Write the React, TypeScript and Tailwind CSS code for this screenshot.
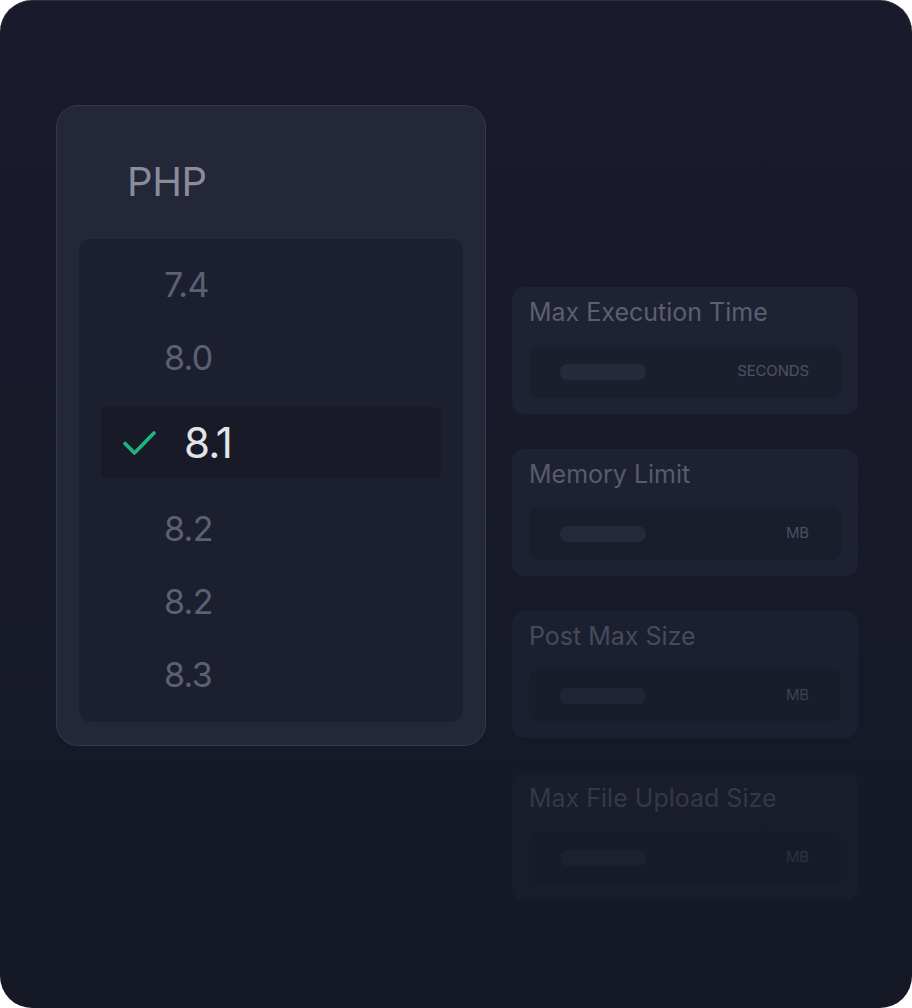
const versions = ['7.4', '8.0', '8.1', '8.2', '8.2', '8.3']

const settings = [
  { label: 'Max Execution Time', unit: 'SECONDS', fade: 'opacity-100' },
  { label: 'Memory Limit', unit: 'MB', fade: 'opacity-95' },
  { label: 'Post Max Size', unit: 'MB', fade: 'opacity-70' },
  { label: 'Max File Upload Size', unit: 'MB', fade: 'opacity-45' },
]

function Check() {
  return (
    <svg width="36" height="28" viewBox="0 0 36 28" fill="none">
      <path d="M3 14.5 L12.5 24 L32 4" stroke="#1bb57e" strokeWidth="3.6" strokeLinecap="round" strokeLinejoin="round" />
    </svg>
  )
}

function VersionList() {
  return (
    <div className="flex h-[483px] flex-col rounded-[12px] bg-[#1c1f2f] pt-[9px]">
      {versions.map((v, i) =>
        v === '8.1' ? (
          <div key={i} className="mx-[22px] my-[13px] flex h-[72px] items-center rounded-[6px] bg-[#181a28] pl-[21px]">
            <Check />
            <span className="ml-[26px] text-[42px] leading-none tracking-[-0.02em] text-[#e2e4eb]">{v}</span>
          </div>
        ) : (
          <div key={i} className="flex h-[73px] items-center pl-[85px] text-[34px] leading-none tracking-[-0.02em] text-[#5d6070]">
            {v}
          </div>
        ),
      )}
    </div>
  )
}

function SettingCard({ label, unit, fade }: { label: string; unit: string; fade: string }) {
  return (
    <div className={`flex h-[127px] flex-col rounded-[12px] bg-[#1f2233] px-[17px] pt-[10px] ${fade}`}>
      <div className="text-[25px] leading-[30px] text-[#5c5f70]">{label}</div>
      <div className="mt-[18px] flex h-[53px] items-center justify-between rounded-[9px] bg-[#1b1e2d] pl-[31px] pr-[32px]">
        <div className="h-[16px] w-[86px] rounded-full bg-[#272a3b]" />
        <span className="text-[15px] tracking-[-0.01em] text-[#4f5264]">{unit}</span>
      </div>
    </div>
  )
}

export default function App() {
  return (
    <div className="min-h-screen bg-white" style={{ fontFamily: 'Inter, "Noto Sans", sans-serif' }}>
      <div className="flex h-[1008px] w-[912px] rounded-[32px] border-t border-[#2b2e42] bg-gradient-to-b from-[#191b2d] to-[#151825] pl-[56px] pt-[104px]">
        <div className="flex h-[641px] w-[430px] flex-col rounded-[22px] border border-[#34384b] bg-[#232738] px-[22px]">
          <div className="flex h-[133px] items-center pl-[48px] pt-[18px] text-[40px] leading-none tracking-[-0.01em] text-[#898c9b]">
            PHP
          </div>
          <VersionList />
        </div>
        <div className="ml-[26px] mt-[182px] flex w-[346px] flex-col gap-[35px]">
          {settings.map((s) => (
            <SettingCard key={s.label} {...s} />
          ))}
        </div>
      </div>
    </div>
  )
}
